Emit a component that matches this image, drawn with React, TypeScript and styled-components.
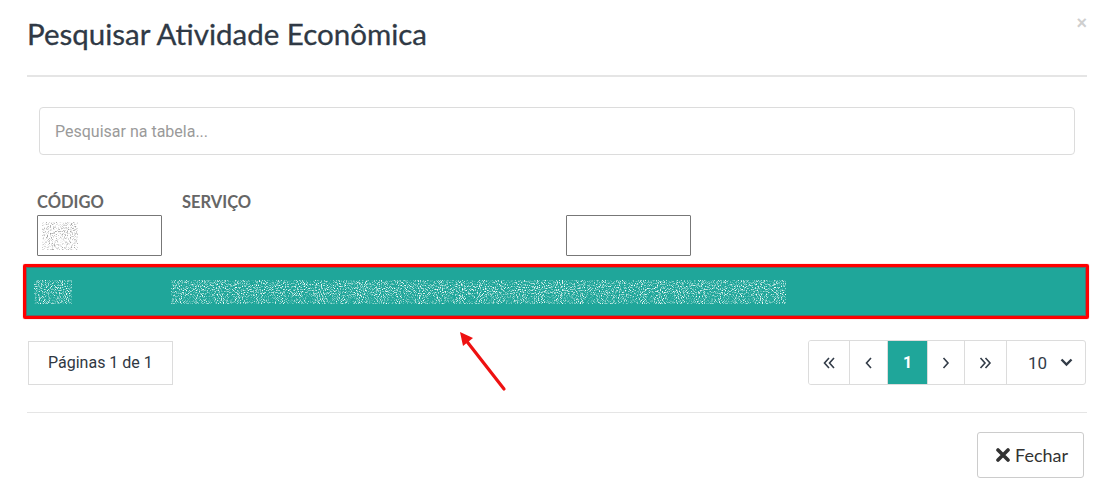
import styled, { createGlobalStyle } from "styled-components";

const GlobalStyle = createGlobalStyle`
    html, body {
        margin: 0;
        padding: 0;
        background: #ffffff;
    }
    * { box-sizing: border-box; }
`

// speckled placeholder for masked cell values
function Masked({width, height, tone}: {width: number, height: number, tone: "light" | "dark"}) {
    const id = `speckle-${tone}-${width}`;
    const [r, g, b] = tone === "light" ? [1, 1, 1] : [0.35, 0.35, 0.35];
    return (
        <svg width={width} height={height} style={{display: "block"}}>
            <filter id={id} x="0" y="0" width="100%" height="100%">
                <feTurbulence type="fractalNoise" baseFrequency="0.95" numOctaves="2" seed={width} />
                <feColorMatrix
                    type="matrix"
                    values={`0 0 0 0 ${r}  0 0 0 0 ${g}  0 0 0 0 ${b}  3.4 0 0 0 -1.65`}
                />
            </filter>
            <rect width={width} height={height} filter={`url(#${id})`} />
        </svg>
    );
}

function Chevrons({dir, double}: {dir: "left" | "right", double?: boolean}) {
    const single = dir === "left" ? "M7 2 L2.5 7 L7 12" : "M2.5 2 L7 7 L2.5 12";
    const w = double ? 15 : 10;
    return (
        <svg width={w} height="14" viewBox={`0 0 ${w} 14`}>
            <path d={single} fill="none" stroke="#333c48" strokeWidth="1.6" />
            {double && <path d={single} transform="translate(5 0)" fill="none" stroke="#333c48" strokeWidth="1.6" />}
        </svg>
    );
}

export default function App() {
    return (
        <Modal>
            <GlobalStyle/>
            <Header>
                <Title>Pesquisar Atividade Econômica</Title>
                <CloseX>×</CloseX>
            </Header>
            <Body>
                <SearchInput placeholder="Pesquisar na tabela..." />
                <Table>
                    <colgroup>
                        <col style={{width: 145}} />
                        <col />
                    </colgroup>
                    <thead>
                        <tr>
                            <HeadCell>CÓDIGO</HeadCell>
                            <HeadCell>SERVIÇO</HeadCell>
                        </tr>
                        <tr>
                            <FilterCell>
                                <FilterBox>
                                    <Masked width={36} height={28} tone="dark" />
                                </FilterBox>
                            </FilterCell>
                            <FilterCell $center>
                                <FilterBox />
                            </FilterCell>
                        </tr>
                    </thead>
                </Table>
                <Highlight>
                    <SelectedRow>
                        <CodeCell><Masked width={38} height={24} tone="light" /></CodeCell>
                        <ServiceCell><Masked width={615} height={24} tone="light" /></ServiceCell>
                    </SelectedRow>
                </Highlight>
                <PagerBar>
                    <PageInfo>Páginas 1 de 1</PageInfo>
                    <Pager>
                        <PageButton $w={41}><Chevrons dir="left" double /></PageButton>
                        <PageButton $w={38}><Chevrons dir="left" /></PageButton>
                        <PageButton $w={40} $active>1</PageButton>
                        <PageButton $w={37}><Chevrons dir="right" /></PageButton>
                        <PageButton $w={42}><Chevrons dir="right" double /></PageButton>
                        <SizeSelect>
                            <span>10</span>
                            <svg width="13" height="9" viewBox="0 0 13 9">
                                <path d="M1.5 1.5 L6.5 6.5 L11.5 1.5" fill="none" stroke="#333c48" strokeWidth="2.4" />
                            </svg>
                        </SizeSelect>
                    </Pager>
                </PagerBar>
            </Body>
            <Footer>
                <CloseButton>
                    <svg width="14" height="14" viewBox="0 0 14 14">
                        <path d="M2 2 L12 12 M12 2 L2 12" stroke="#333" strokeWidth="3.6" strokeLinecap="round" />
                    </svg>
                    Fechar
                </CloseButton>
            </Footer>
            <Arrow width="60" height="70" viewBox="0 0 60 70">
                <path d="M47 62 L8 12" stroke="#ee1111" strokeWidth="3.2" strokeLinecap="round" />
                <path d="M3 5 L16 11 L6 19 Z" fill="#ee1111" />
            </Arrow>
        </Modal>
    );
}

const Modal = styled.div`
    position: relative;
    width: 1101px;
    height: 499px;
    padding: 0 14px 0 27px;
    background: #ffffff;
`

const Header = styled.div`
    display: flex;
    justify-content: space-between;
    align-items: flex-start;
    height: 77px;
    padding-top: 17px;
    border-bottom: 2px solid #e5e5e5;
`

const Title = styled.h4`
    margin: 0;
    font-family: 'Lato', sans-serif;
    font-weight: 400;
    font-size: 29.5px;
    line-height: 34px;
    color: #2f3945;
    -webkit-text-stroke: 0.3px #2f3945;
`

const CloseX = styled.span`
    margin-top: -3px;
    font-family: 'Liberation Sans', sans-serif;
    font-weight: 700;
    font-size: 18px;
    line-height: 18px;
    color: #cfcfcf;
`

const Body = styled.div`
    padding-top: 30px;
    height: 336px;
    border-bottom: 1px solid #e5e5e5;
`

const SearchInput = styled.input`
    display: block;
    width: 1036px;
    height: 48px;
    margin-left: 12px;
    padding: 0 15px;
    border: 1px solid #dcdcdc;
    border-radius: 4px;
    font-family: 'Roboto', sans-serif;
    font-size: 16px;
    color: #333;
    outline: none;
    &::placeholder { color: #9a9a9a; }
`

const Table = styled.table`
    width: 1058px;
    margin-top: 36px;
    border-collapse: collapse;
`

const HeadCell = styled.th`
    padding: 0 10px;
    text-align: left;
    font-family: 'Lato', sans-serif;
    font-weight: 700;
    font-size: 16.5px;
    line-height: 22px;
    color: #666;
`

const FilterCell = styled.td<{$center?: boolean}>`
    padding: 2px 10px 0;
    text-align: ${({$center}) => $center ? "center" : "left"};
    vertical-align: top;
`

const FilterBox = styled.div`
    display: inline-flex;
    align-items: center;
    width: 125px;
    height: 41px;
    padding-left: 4px;
    border: 1px solid #777;
    border-radius: 1px;
    vertical-align: top;
`

const Highlight = styled.div`
    width: 1066px;
    margin: 8px 0 0 -4px;
    border: 3px solid #ff0000;
    border-radius: 2px;
    box-shadow: 0 0 1px #ff4040;
`

const SelectedRow = styled.div`
    display: flex;
    align-items: center;
    height: 49px;
    background: #1fa69a;
    border: 1px solid #5f6b69;
`

const CodeCell = styled.div`
    width: 144px;
    padding-left: 7px;
`

const ServiceCell = styled.div`
    flex: 1;
`

const PagerBar = styled.div`
    display: flex;
    justify-content: space-between;
    align-items: center;
    width: 1058px;
    margin: 21px 0 0 1px;
`

const PageInfo = styled.div`
    height: 44px;
    padding: 0 19px;
    display: flex;
    align-items: center;
    border: 1px solid #dcdcdc;
    font-family: 'Roboto', sans-serif;
    font-size: 16px;
    color: #2f3742;
`

const Pager = styled.div`
    display: flex;
    height: 45px;
    border: 1px solid #dcdcdc;
    border-radius: 3px;
    overflow: hidden;
`

const PageButton = styled.div<{$w: number, $active?: boolean}>`
    width: ${({$w}) => $w}px;
    display: flex;
    align-items: center;
    justify-content: center;
    border-right: 1px solid #dcdcdc;
    background: ${({$active}) => $active ? "#1fa69a" : "#ffffff"};
    color: ${({$active}) => $active ? "#ffffff" : "#333c48"};
    font-family: 'Roboto', sans-serif;
    font-size: 16px;
    font-weight: ${({$active}) => $active ? 700 : 400};
`

const SizeSelect = styled.div`
    width: 78px;
    display: flex;
    align-items: center;
    justify-content: space-between;
    padding: 0 12px 0 21px;
    font-family: 'Roboto', sans-serif;
    font-size: 17px;
    color: #333c48;
`

const Footer = styled.div`
    display: flex;
    justify-content: flex-end;
    padding: 19px 3px 0 0;
`

const CloseButton = styled.button`
    display: flex;
    align-items: center;
    gap: 5px;
    width: 107px;
    height: 46px;
    padding: 0 0 0 18px;
    background: #ffffff;
    border: 1px solid #cccccc;
    border-radius: 3px;
    font-family: 'Lato', sans-serif;
    font-size: 18px;
    color: #333;
`

const Arrow = styled.svg`
    position: absolute;
    left: 457px;
    top: 327px;
`
